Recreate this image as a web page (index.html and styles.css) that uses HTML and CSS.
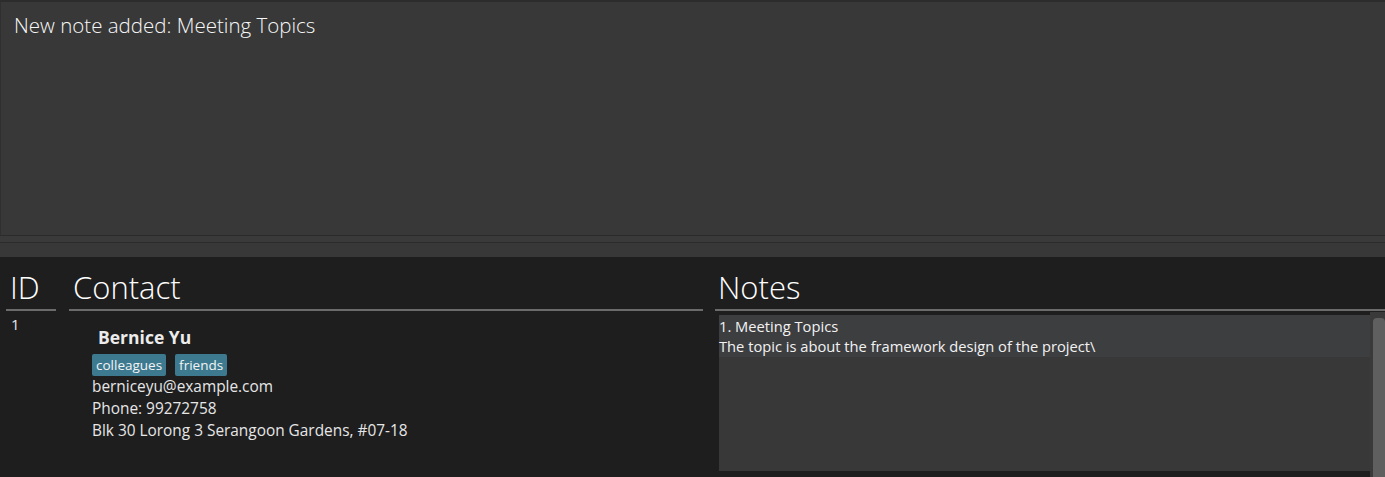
FILE: index.html
```html
<!DOCTYPE html>
<html>
<head>
<meta charset="utf-8">
<link rel="stylesheet" href="styles.css">
</head>
<body>
<div class="app">
  <section class="result">
    <p class="result-text">New note added: Meeting Topics</p>
  </section>
  <div class="splitter">
    <div class="splitter-band"></div>
    <div class="splitter-rest"></div>
  </div>
  <main class="main">
    <div class="col col-id">
      <h2 class="col-title">ID</h2>
      <div class="id-cell">1</div>
    </div>
    <div class="col col-contact">
      <h2 class="col-title">Contact</h2>
      <div class="card">
        <div class="name">Bernice Yu</div>
        <div class="tags">
          <span class="tag">colleagues</span>
          <span class="tag">friends</span>
        </div>
        <div class="detail">berniceyu@example.com</div>
        <div class="detail">Phone: 99272758</div>
        <div class="detail">Blk 30 Lorong 3 Serangoon Gardens, #07-18</div>
      </div>
    </div>
    <div class="col col-notes">
      <h2 class="col-title notes-title">Notes</h2>
      <div class="notes-wrap">
        <div class="notes-list">
          <div class="note">
            <div class="note-line">1. Meeting Topics</div>
            <div class="note-line">The topic is about the framework design of the project\</div>
          </div>
        </div>
        <div class="scroll-track"><div class="scroll-thumb"></div></div>
      </div>
    </div>
  </main>
</div>
</body>
</html>
```
FILE: styles.css
```css
* { box-sizing: border-box; }
html, body {
  margin: 0;
  padding: 0;
  background: #1e1e1e;
  width: 1385px;
  height: 477px;
  overflow: hidden;
  font-family: "Open Sans", "Noto Sans", sans-serif;
}
.app {
  display: flex;
  flex-direction: column;
  height: 477px;
}
.result {
  flex: 0 0 235px;
  height: 235px;
  background: #383838;
  border-top: 2px solid #2c2c2c;
  border-left: 1px solid #2f2f2f;
  padding: 10px 13px;
}
.result-text {
  margin: 0;
  color: #f7f7f7;
  font-weight: 300;
  font-size: 20.5px;
  line-height: 26px;
}
.splitter {
  flex: 0 0 22px;
  display: flex;
  flex-direction: column;
}
.splitter-band {
  height: 8px;
  background: #3a3a3a;
  border-top: 1px solid #2b2b2b;
  border-bottom: 1px solid #2b2b2b;
}
.splitter-rest {
  height: 14px;
  background: #383838;
}
.main {
  flex: 0 0 220px;
  height: 220px;
  overflow: hidden;
  display: grid;
  grid-template-columns: 50px 634px 670px;
  column-gap: 12.5px;
  padding-left: 6px;
}
.col-contact { margin-left: 0.5px; }
.col { display: flex; flex-direction: column; }
.col-title {
  margin: 0;
  height: 54px;
  padding-top: 10px;
  padding-left: 4px;
  font-weight: 300;
  font-size: 31px;
  line-height: 40px;
  color: #ffffff;
  border-bottom: 2px solid #6b6b6b;
}
.notes-title { padding-left: 3px; }
.id-cell {
  padding: 4px 0 0 5px;
  font-size: 15px;
  line-height: 19px;
  color: #e8e8e8;
}
.card {
  padding: 14px 0 0 23px;
  color: #e6e6e6;
}
.name {
  padding-left: 6px;
  font-weight: 700;
  font-size: 17.5px;
  line-height: 24px;
  color: #ececec;
}
.tags {
  display: flex;
  gap: 9px;
  margin-top: 5px;
  margin-bottom: 0;
}
.tag {
  background: #3d7a90;
  color: #f4f4f4;
  border-radius: 2px;
  font-size: 13.5px;
  line-height: 22px;
  padding: 0 4px;
}
.detail {
  font-size: 15.4px;
  line-height: 22px;
}
.notes-wrap {
  flex: 1;
  display: flex;
  padding-top: 1px;
  padding-left: 4px;
}
.notes-list {
  width: 651px;
  height: 156px;
  margin-top: 3px;
  background: #383838;
}
.note {
  background: #3d3e40;
  height: 42px;
  padding-top: 1px;
}
.note-line {
  font-size: 14.7px;
  line-height: 20px;
  color: #f2f2f2;
}
.scroll-track {
  width: 15px;
  background: #3a3a3a;
  padding: 6px 0 0 3px;
}
.scroll-thumb {
  height: 200px;
  background: #5f5f5f;
  border-radius: 4px 4px 0 0;
}
```
